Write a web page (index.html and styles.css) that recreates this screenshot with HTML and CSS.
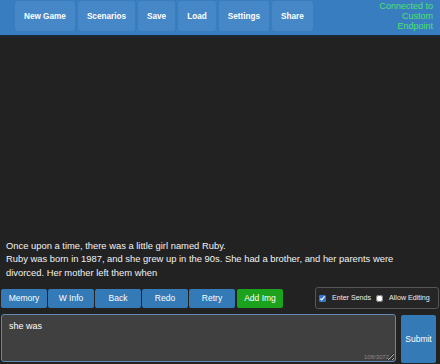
FILE: index.html
```html
<!DOCTYPE html>
<html lang="en">
<head>
    <meta charset="UTF-8">
    <meta name="viewport" content="width=device-width, initial-scale=1.0">
    <title>Story</title>
    <link rel="stylesheet" href="styles.css">
</head>
<body>
    <div class="topbar">
        <div class="menu">
            <button class="menu-btn">New Game</button>
            <button class="menu-btn">Scenarios</button>
            <button class="menu-btn">Save</button>
            <button class="menu-btn">Load</button>
            <button class="menu-btn">Settings</button>
            <button class="menu-btn">Share</button>
        </div>
        <div class="status">Connected to<br>Custom<br>Endpoint</div>
    </div>

    <div class="story">
        <p>Once upon a time, there was a little girl named Ruby.<br>Ruby was born in 1987, and she grew up in the 90s. She had a brother, and her parents were divorced. Her mother left them when</p>
    </div>

    <div class="controls">
        <div class="actions">
            <button class="act-btn">Memory</button>
            <button class="act-btn">W Info</button>
            <button class="act-btn">Back</button>
            <button class="act-btn">Redo</button>
            <button class="act-btn">Retry</button>
            <button class="act-btn green">Add Img</button>
        </div>
        <div class="options">
            <label><input type="checkbox" checked> Enter Sends</label>
            <label><input type="checkbox"> Allow Editing</label>
        </div>
    </div>

    <div class="input-row">
        <div class="input-wrap">
            <textarea class="prompt">she was</textarea>
            <span class="counter">108/3072</span>
        </div>
        <button class="submit">Submit</button>
    </div>
</body>
</html>
```

FILE: styles.css
```css
* {
    margin: 0;
    padding: 0;
    box-sizing: border-box;
}

body {
    font-family: 'Liberation Sans', Arial, sans-serif;
    background: #222;
    color: #fff;
    width: 440px;
    height: 364px;
    display: flex;
    flex-direction: column;
    overflow: hidden;
}

.topbar {
    height: 37px;
    background: #387dbf;
    border-bottom: 2px solid #1c2a38;
    display: flex;
    padding-left: 15px;
}

.menu {
    display: flex;
    gap: 3px;
    padding-top: 1px;
}

.menu-btn {
    height: 30px;
    padding: 0 9px;
    background: #4688c7;
    color: #fff;
    border: none;
    border-radius: 3px;
    font-family: inherit;
    font-size: 8.2px;
    font-weight: bold;
}

.status {
    margin-left: auto;
    padding: 1px 7px 0 0;
    text-align: right;
    color: #4ce070;
    font-size: 9px;
    line-height: 10px;
}

.story {
    flex: 1;
    display: flex;
    flex-direction: column;
    justify-content: flex-end;
    padding: 0 34px 8px 6px;
    font-size: 9.4px;
    line-height: 13.4px;
    color: #f2f2f2;
}

.controls {
    display: flex;
    align-items: center;
    height: 22px;
    padding: 0 1px;
}

.actions {
    display: flex;
    gap: 1px;
}

.act-btn {
    width: 46px;
    height: 19px;
    background: #337ab7;
    color: #fff;
    border: none;
    border-radius: 2px;
    font-family: inherit;
    font-size: 8.5px;
}

.act-btn.green {
    background: #1ca21c;
    margin-left: 1px;
}

.options {
    margin-left: auto;
    width: 124px;
    height: 22px;
    border: 1px solid #555;
    border-radius: 3px;
    background: #262626;
    display: flex;
    align-items: center;
    gap: 5px;
    padding-left: 3px;
    font-size: 7.1px;
    color: #eee;
    white-space: nowrap;
}

.options label {
    display: flex;
    align-items: center;
    gap: 6px;
}

.options input {
    width: 7px;
    height: 7px;
    accent-color: #2f74d0;
}

.input-row {
    display: flex;
    gap: 5px;
    padding: 5px 3px 1px 1px;
}

.input-wrap {
    position: relative;
    width: 395px;
}

.prompt {
    display: block;
    width: 100%;
    height: 48px;
    background: #404040;
    color: #fff;
    border: 1px solid #5f89b3;
    border-radius: 3px;
    padding: 6px 7px;
    font-family: inherit;
    font-size: 9px;
    outline: none;
}

.counter {
    position: absolute;
    right: 7px;
    bottom: 3px;
    font-size: 6px;
    color: #888;
}

.submit {
    width: 35px;
    height: 48px;
    margin-top: 1px;
    background: #337ab7;
    color: #fff;
    border: none;
    border-radius: 2px;
    font-family: inherit;
    font-size: 8.5px;
}
```
